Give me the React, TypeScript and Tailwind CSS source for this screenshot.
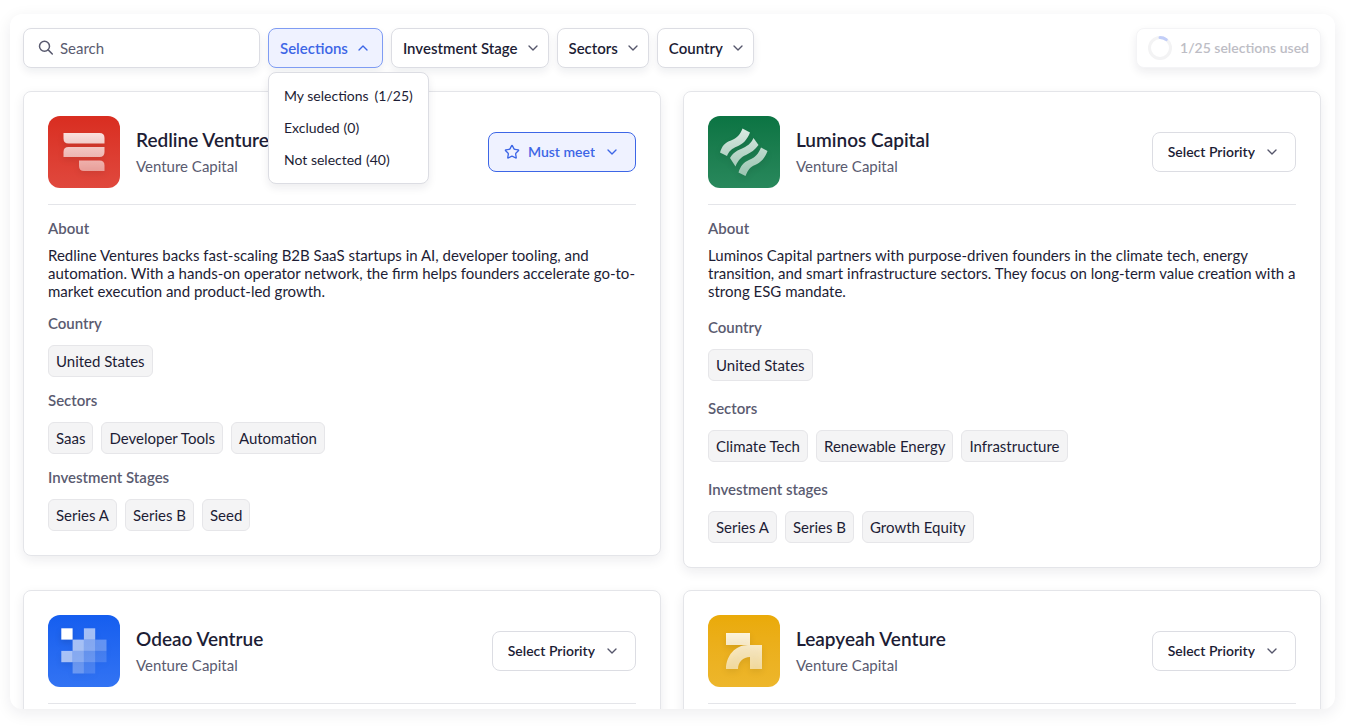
import type { ReactNode } from "react";
import { ChevronDown, ChevronUp, Star } from "lucide-react";
import clsx from "clsx";

type Tags = { label: string; items: string[] };

type Investor = {
  name: string;
  type: string;
  logo: ReactNode;
  logoBg: string;
  about?: string;
  tags: Tags[];
  priority: string;
  spacing: string;
};

function RedlineLogo() {
  return (
    <svg viewBox="0 0 72 72" className="size-full drop-shadow-md">
      <defs>
        <linearGradient id="redline" x1="0" y1="0" x2="0" y2="1">
          <stop offset="0" stopColor="#fff" stopOpacity="0.85" />
          <stop offset="1" stopColor="#fff" stopOpacity="0.5" />
        </linearGradient>
      </defs>
      <path
        fill="url(#redline)"
        d="M15.500 17H51.500Q56.500 17 56.500 22V27.500H20.500Q15.500 27.500 15.500 22.500ZM20.500 31H56.500V36Q56.500 41 51.500 41H15.500V36Q15.500 31 20.500 31ZM31 44.500H51.500Q56.500 44.500 56.500 49.500V55H36Q31 55 31 50Z"
      />
    </svg>
  );
}

function LuminosLogo() {
  return (
    <svg viewBox="0 0 72 72" className="size-full drop-shadow-md">
      <defs>
        <linearGradient id="luminos" x1="0" y1="0" x2="0" y2="1">
          <stop offset="0" stopColor="#fff" stopOpacity="0.85" />
          <stop offset="1" stopColor="#fff" stopOpacity="0.55" />
        </linearGradient>
      </defs>
      <path
        fill="url(#luminos)"
        d="M34.500 12.500L42 16.500C39 24 35 28 29 30.500C24 32.500 21 35 19 40L12 36.500C14 30 17 26.500 23 24.500C29 22 32 19 34.500 12.500ZM45.500 22L50.500 29C47 34 43 36.500 38 39C33 41 30 44.500 27.500 50.500L22 42C25 37 28 35 33 33C39 30.500 43 27.500 45.500 22ZM53 31.500L59.500 35C57 42 53 46.500 47 49C42 51 40 54 37.500 60L30.500 56.500C32.500 50 35.500 46.500 41 44C47 41.500 50.500 38 53 31.500Z"
      />
    </svg>
  );
}

const pixels = [
  [0, 0, 1],
  [2, 0, 0.6],
  [1, 1, 0.6],
  [2, 1, 0.45],
  [3, 1, 0.3],
  [0, 2, 0.6],
  [1, 2, 0.45],
  [2, 2, 0.3],
  [3, 2, 0.15],
  [1, 3, 0.3],
  [2, 3, 0.15],
];

function OdeaoLogo() {
  return (
    <svg viewBox="0 0 72 72" className="size-full drop-shadow-md">
      {pixels.map(([x, y, opacity]) => (
        <rect
          key={`${x}-${y}`}
          x={13.3 + x * 11.3}
          y={13.3 + y * 11.3}
          width={11.3}
          height={11.3}
          fill="#fff"
          fillOpacity={opacity}
        />
      ))}
    </svg>
  );
}

function LeapyeahLogo() {
  return (
    <svg viewBox="0 0 72 72" className="size-full drop-shadow-md">
      <defs>
        <linearGradient id="leapyeah" x1="0" y1="0" x2="0" y2="1">
          <stop offset="0" stopColor="#fff" stopOpacity="0.85" />
          <stop offset="1" stopColor="#fff" stopOpacity="0.55" />
        </linearGradient>
      </defs>
      <path
        fill="url(#leapyeah)"
        d="M18 18H42V30H54V54H42V42C35 42 30 47 30 54H18C18 41 27 30 40 30H18Z"
      />
    </svg>
  );
}

const investors: Investor[] = [
  {
    name: "Redline Ventures",
    type: "Venture Capital",
    logo: <RedlineLogo />,
    logoBg: "bg-linear-to-b from-[#d92d20] to-[#e0483d]",
    about:
      "Redline Ventures backs fast-scaling B2B SaaS startups in AI, developer tooling, and automation. With a hands-on operator network, the firm helps founders accelerate go-to-market execution and product-led growth.",
    tags: [
      { label: "Country", items: ["United States"] },
      { label: "Sectors", items: ["Saas", "Developer Tools", "Automation"] },
      { label: "Investment Stages", items: ["Series A", "Series B", "Seed"] },
    ],
    priority: "Must meet",
    spacing: "mt-3.5",
  },
  {
    name: "Luminos Capital",
    type: "Venture Capital",
    logo: <LuminosLogo />,
    logoBg: "bg-linear-to-b from-[#0b7443] to-[#28885c]",
    about:
      "Luminos Capital partners with purpose-driven founders in the climate tech, energy transition, and smart infrastructure sectors. They focus on long-term value creation with a strong ESG mandate.",
    tags: [
      { label: "Country", items: ["United States"] },
      {
        label: "Sectors",
        items: ["Climate Tech", "Renewable Energy", "Infrastructure"],
      },
      {
        label: "Investment stages",
        items: ["Series A", "Series B", "Growth Equity"],
      },
    ],
    priority: "Select Priority",
    spacing: "mt-[18px]",
  },
  {
    name: "Odeao Ventrue",
    type: "Venture Capital",
    logo: <OdeaoLogo />,
    logoBg: "bg-linear-to-b from-[#155eef] to-[#3273f3]",
    tags: [],
    priority: "Select Priority",
    spacing: "mt-3.5",
  },
  {
    name: "Leapyeah Venture",
    type: "Venture Capital",
    logo: <LeapyeahLogo />,
    logoBg: "bg-linear-to-b from-[#eaaa08] to-[#edb62b]",
    tags: [],
    priority: "Select Priority",
    spacing: "mt-3.5",
  },
];

const filters = ["Investment Stage", "Sectors", "Country"];

const selections = [
  { label: "My selections", count: "(1/25)", gap: "gap-1.5" },
  { label: "Excluded", count: "(0)", gap: "gap-1" },
  { label: "Not selected", count: "(40)", gap: "gap-1" },
];

function FilterSelect({ label }: { label: string }) {
  return (
    <div className="grid items-center">
      <select
        aria-label={label}
        className="col-start-1 row-start-1 h-10 appearance-none rounded-lg border border-[#dcdde3] bg-white pr-[30px] pl-[11px] font-semibold shadow-[0_4px_8px_rgba(20,25,50,0.07)] [field-sizing:content]"
      >
        <option>{label}</option>
      </select>
      <ChevronDown className="pointer-events-none z-10 col-start-1 row-start-1 mr-2 size-4 justify-self-end text-[#55566b]" />
    </div>
  );
}

function PrioritySelect({ name, value }: { name: string; value: string }) {
  const picked = value === "Must meet";
  return (
    <div
      className={clsx("grid items-center text-sm", picked && "text-[#3d66e6]")}
    >
      <select
        aria-label={`Priority for ${name}`}
        defaultValue={value}
        className={clsx(
          "col-start-1 row-start-1 h-10 appearance-none rounded-lg border pr-10 font-semibold [field-sizing:content]",
          picked
            ? "border-[#3d66e6] bg-[#eff2ff] pl-[39px]"
            : "border-[#dcdde3] bg-white pl-[15px]"
        )}
      >
        <option>Select Priority</option>
        <option>Must meet</option>
      </select>
      {picked && (
        <Star className="pointer-events-none z-10 col-start-1 row-start-1 ml-4 size-4" />
      )}
      <ChevronDown
        className={clsx(
          "pointer-events-none z-10 col-start-1 row-start-1 mr-4 size-4 justify-self-end",
          !picked && "text-[#55566b]"
        )}
      />
    </div>
  );
}

function InvestorCard({ investor }: { investor: Investor }) {
  return (
    <article className="rounded-lg border border-[#e4e5e9] bg-white p-6 shadow-[0_4px_12px_rgba(20,25,50,0.08)]">
      <header className="flex items-center gap-4 border-b border-[#e4e5e9] pb-4">
        <div
          className={clsx(
            "size-[72px] shrink-0 overflow-hidden rounded-xl",
            investor.logoBg
          )}
        >
          {investor.logo}
        </div>
        <div className="min-w-0 flex-1">
          <h2 className="truncate text-[19px] leading-7 font-semibold">
            {investor.name}
          </h2>
          <p className="leading-6 text-[#5a5b70]">{investor.type}</p>
        </div>
        <PrioritySelect name={investor.name} value={investor.priority} />
      </header>
      {investor.about && (
        <section className="mt-3.5">
          <h3 className="leading-[18px] font-semibold text-[#5a5b70]">About</h3>
          <p className="mt-[9px] leading-[18px]">{investor.about}</p>
        </section>
      )}
      {investor.tags.map((group) => (
        <section key={group.label} className={investor.spacing}>
          <h3 className="leading-[18px] font-semibold text-[#5a5b70]">
            {group.label}
          </h3>
          <ul className="mt-[13px] flex flex-wrap gap-2">
            {group.items.map((item) => (
              <li
                key={item}
                className="flex h-8 items-center rounded-md border border-[#e6e6e9] bg-[#f4f4f5] px-[7px]"
              >
                {item}
              </li>
            ))}
          </ul>
        </section>
      ))}
    </article>
  );
}

function SelectionsMenu() {
  return (
    <div className="relative">
      <button
        type="button"
        aria-expanded="true"
        className="flex h-10 items-center gap-[7px] rounded-lg border border-[#7f9cf3] bg-[#eff2ff] px-[11px] font-semibold text-[#3d66e6] shadow-[0_4px_8px_rgba(20,25,50,0.07)]"
      >
        Selections
        <ChevronUp className="size-4" />
      </button>
      <ul className="absolute top-11 left-0 z-20 rounded-lg border border-[#dcdde3] bg-white py-[7px] text-sm shadow-[0_4px_8px_rgba(20,25,50,0.08)]">
        {selections.map((item) => (
          <li key={item.label}>
            <button
              type="button"
              className={clsx(
                "flex h-8 items-center px-[15px] whitespace-nowrap",
                item.gap
              )}
            >
              <span>{item.label}</span>
              <span>{item.count}</span>
            </button>
          </li>
        ))}
      </ul>
    </div>
  );
}

function Toolbar() {
  return (
    <div className="flex items-center gap-2">
      <label className="flex h-10 w-[237px] items-center gap-1.5 rounded-lg border border-[#dcdde3] bg-white px-3.5 text-[#5a5b70] shadow-[0_4px_8px_rgba(20,25,50,0.07)]">
        <svg
          viewBox="0 0 16 16"
          fill="none"
          stroke="currentColor"
          strokeWidth="1.5"
          strokeLinecap="round"
          className="size-4 shrink-0"
        >
          <circle cx="6.5" cy="6.2" r="5" />
          <path d="M10.200 9.900L14.300 14" />
        </svg>
        <input
          type="text"
          aria-label="Search"
          placeholder="Search"
          className="w-full min-w-0 outline-none placeholder:text-[#5a5b70]"
        />
      </label>
      <SelectionsMenu />
      {filters.map((label) => (
        <FilterSelect key={label} label={label} />
      ))}
      <div className="ml-auto flex h-10 items-center gap-2 rounded-lg border border-[#f4f4f6] bg-white px-[11px] text-sm font-semibold text-[#bdbdc5] shadow-[0_4px_10px_rgba(20,25,50,0.08)]">
        <svg viewBox="0 0 24 24" fill="none" strokeWidth="3" className="size-6">
          <circle cx="12" cy="12" r="10.5" stroke="#f3f3f4" />
          <path
            d="M12 1.500A10.500 10.500 0 0 1 18.300 3.600"
            stroke="#c2cef8"
            strokeLinecap="round"
          />
        </svg>
        1/25 selections used
      </div>
    </div>
  );
}

export default function App() {
  return (
    <div className="h-screen bg-white pt-3.5 pr-[11px] pb-[18px] pl-2.5 font-['Lato',sans-serif] text-[15px] text-[#1d1d35]">
      <main className="h-full overflow-hidden rounded-xl bg-white pt-3.5 pr-3.5 pl-[13px] shadow-[0_4px_16px_rgba(20,25,50,0.08)]">
        <Toolbar />
        <div className="mt-[23px] grid grid-cols-2 items-start gap-[22px]">
          {investors.map((investor) => (
            <InvestorCard key={investor.name} investor={investor} />
          ))}
        </div>
      </main>
    </div>
  );
}
